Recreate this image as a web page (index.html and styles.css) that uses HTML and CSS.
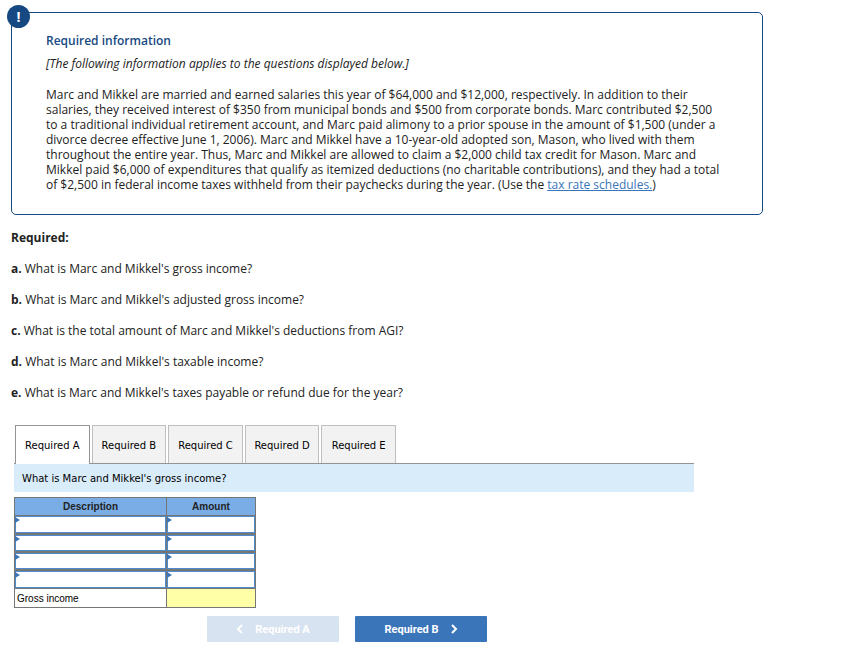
FILE: index.html
```html
<!DOCTYPE html>
<html lang="en">
<head>
<meta charset="utf-8">
<title>Required information</title>
<link rel="stylesheet" href="styles.css">
</head>
<body>
<main class="page">
  <section class="info">
    <span class="badge">!</span>
    <h1 class="info-title">Required information</h1>
    <p class="note">[The following information applies to the questions displayed below.]</p>
    <p class="story">Marc and Mikkel are married and earned salaries this year of $64,000 and $12,000, respectively. In addition to their<br>
    salaries, they received interest of $350 from municipal bonds and $500 from corporate bonds. Marc contributed $2,500<br>
    to a traditional individual retirement account, and Marc paid alimony to a prior spouse in the amount of $1,500 (under a<br>
    divorce decree effective June 1, 2006). Marc and Mikkel have a 10-year-old adopted son, Mason, who lived with them<br>
    throughout the entire year. Thus, Marc and Mikkel are allowed to claim a $2,000 child tax credit for Mason. Marc and<br>
    Mikkel paid $6,000 of expenditures that qualify as itemized deductions (no charitable contributions), and they had a total<br>
    of $2,500 in federal income taxes withheld from their paychecks during the year. (Use the <a href="#">tax rate schedules.</a>)</p>
  </section>

  <section class="questions">
    <p><b>Required:</b></p>
    <p><b>a.</b> What is Marc and Mikkel's gross income?</p>
    <p><b>b.</b> What is Marc and Mikkel's adjusted gross income?</p>
    <p><b>c.</b> What is the total amount of Marc and Mikkel's deductions from AGI?</p>
    <p><b>d.</b> What is Marc and Mikkel's taxable income?</p>
    <p><b>e.</b> What is Marc and Mikkel's taxes payable or refund due for the year?</p>
  </section>

  <section class="answer">
    <div class="tabs" role="tablist">
      <button class="tab active" role="tab" aria-selected="true">Required A</button>
      <button class="tab" role="tab" aria-selected="false">Required B</button>
      <button class="tab" role="tab" aria-selected="false">Required C</button>
      <button class="tab" role="tab" aria-selected="false">Required D</button>
      <button class="tab" role="tab" aria-selected="false">Required E</button>
    </div>
    <p class="prompt">What is Marc and Mikkel's gross income?</p>
    <table class="sheet">
      <thead>
        <tr><th class="col-desc">Description</th><th class="col-amount">Amount</th></tr>
      </thead>
      <tbody>
        <tr class="line"><td class="entry"><input type="text" aria-label="Description 1"></td><td class="entry"><input type="text" aria-label="Amount 1"></td></tr>
        <tr class="line"><td class="entry"><input type="text" aria-label="Description 2"></td><td class="entry"><input type="text" aria-label="Amount 2"></td></tr>
        <tr class="line"><td class="entry"><input type="text" aria-label="Description 3"></td><td class="entry"><input type="text" aria-label="Amount 3"></td></tr>
        <tr class="line last"><td class="entry"><input type="text" aria-label="Description 4"></td><td class="entry"><input type="text" aria-label="Amount 4"></td></tr>
        <tr><td class="total-label">Gross income</td><td class="total"></td></tr>
      </tbody>
    </table>
  </section>

  <nav class="steps">
    <button class="step" disabled>
      <svg class="chevron" viewBox="0 0 8 10" aria-hidden="true"><path d="M6 1 2 5 6 9"/></svg>
      Required A
    </button>
    <button class="step">
      Required B
      <svg class="chevron" viewBox="0 0 8 10" aria-hidden="true"><path d="M2 1 6 5 2 9"/></svg>
    </button>
  </nav>
</main>
</body>
</html>
```
FILE: styles.css
```css
* {
  box-sizing: border-box;
}

body {
  margin: 0;
  background: #fff;
  color: #222;
  font: 12px/15px "Open Sans", "Liberation Sans", sans-serif;
}

p,
h1 {
  margin: 0;
}

.page {
  max-width: 774px;
  padding: 12px 11px 24px;
}

.info {
  position: relative;
  padding: 20px 34px 22px;
  border: 1px solid #164982;
  border-radius: 5px;
}

.badge {
  position: absolute;
  top: -8px;
  left: -5px;
  width: 23px;
  height: 23px;
  border-radius: 50%;
  background: #164982;
  color: #fff;
  font-size: 14px;
  font-weight: 700;
  line-height: 23px;
  text-align: center;
}

.info-title {
  color: #164982;
  font-size: 12px;
  font-weight: 600;
}

.note {
  margin: 8px 0 16px;
  font-style: italic;
}

.story {
  white-space: nowrap;
}

.story a {
  color: #3a75ba;
}

.questions {
  display: flex;
  flex-direction: column;
  gap: 16px;
  margin-top: 15px;
}

.answer {
  max-width: 683px;
  margin-top: 25px;
  padding-left: 3px;
  color: #000;
}

.tabs {
  display: flex;
  gap: 2px;
  max-width: 382px;
  padding-left: 1px;
}

.tab {
  flex: 1;
  height: 38px;
  padding: 2px 0 0;
  border: 1px solid #bfbfbf;
  border-bottom: 0;
  background: #f2f2f2;
  color: #000;
  font: 10px/12px "DejaVu Sans", sans-serif;
}

.tab.active {
  height: 39px;
  margin-bottom: -1px;
  border-color: #949494;
  background: #fff;
  z-index: 1;
}

.prompt {
  padding: 8px 8px 7px;
  border-top: 1px solid #949494;
  background: #d9ecfa;
  font: 10px/13px "DejaVu Sans", sans-serif;
}

.sheet {
  margin-top: 5px;
  border-collapse: collapse;
  font: 10px/13px "Liberation Sans", sans-serif;
}

.sheet th,
.sheet td {
  height: 18px;
  padding: 0;
  border: 1px solid #767676;
}

.sheet th {
  background: #7aade6;
  color: #222;
}

.col-desc {
  width: 152px;
}

.col-amount {
  width: 89px;
}

.sheet .entry {
  position: relative;
  height: auto;
}

.line + .line .entry {
  border-top-width: 2px;
}

.entry::before {
  content: "";
  position: absolute;
  top: 1px;
  left: 0;
  border: solid transparent;
  border-width: 3px 0 3px 5px;
  border-left-color: #3a75ba;
}

.entry input {
  display: block;
  width: 100%;
  height: 16px;
  padding: 0 4px;
  border: 1px solid #4f8ccb;
  background: #fff;
  font: inherit;
}

.line:first-child input,
.line.last input {
  height: 17px;
}

.sheet .total-label {
  height: 19px;
  padding-left: 2px;
}

.sheet .total {
  background: #ffffa8;
}

.steps {
  display: flex;
  justify-content: center;
  gap: 16px;
  max-width: 672px;
  margin-top: 8px;
}

.step {
  display: flex;
  align-items: center;
  justify-content: center;
  gap: 11px;
  width: 132px;
  height: 26px;
  padding: 0;
  border: 0;
  border-radius: 1px;
  background: #3a75ba;
  color: #fff;
  font: 700 11px/13px Roboto, "Liberation Sans", sans-serif;
}

.step:disabled {
  background: #d8e3f1;
}

.chevron {
  width: 8px;
  height: 10px;
  fill: none;
  stroke: currentColor;
  stroke-width: 2;
}
```
